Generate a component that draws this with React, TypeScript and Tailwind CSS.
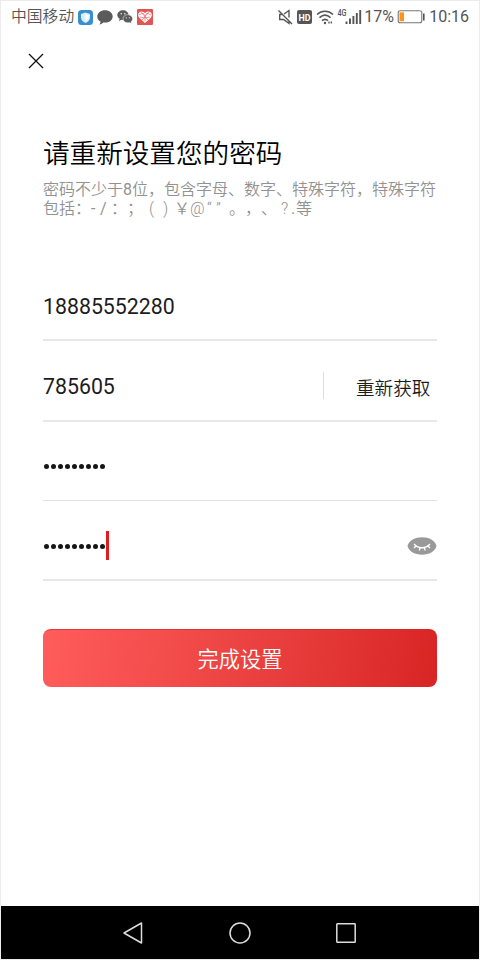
import type { ReactNode } from "react";

function StatusBar() {
    return (
        <div className="flex h-8 shrink-0 items-center justify-between pl-[10px] pr-[10px] text-base text-[#555]">
            <div className="flex items-center">
                <span className="w-[67px] whitespace-nowrap text-[15.8px] font-[350]">中国移动</span>
                <svg width="15" height="15" viewBox="0 0 15 15">
                    <rect width="15" height="15" rx="3.5" fill="#378fce" />
                    <path d="M7.5 2.5 12 4v3.5c0 2.5-1.9 4.3-4.5 5.5C4.9 11.8 3 10 3 7.5V4Z" fill="#d9efff" />
                    <path d="M7.5 4v7.5C9.4 10.4 10.6 9.2 10.6 7.3V5Z" fill="#fff" />
                </svg>
                <svg className="ml-[4px]" width="16" height="15" viewBox="0 0 16 15">
                    <path d="M8 .2c4.200 0 7.700 2.600 7.700 6.200S12.200 12.600 8 12.600c-.6 0-1.200 0-1.700-.1-1 1-2.300 1.700-3.900 1.900.8-.9 1.100-1.800 1.100-2.900C1.500 10.400.3 8.500.3 6.400.3 2.800 3.800.2 8 .2Z" fill="#5b5b5b" />
                </svg>
                <svg className="ml-[4px]" width="16" height="14" viewBox="0 0 16 14">
                    <path d="M6 .3c3 0 5.600 2.100 5.600 4.800S9 9.900 6 9.900c-.6 0-1.200-.1-1.700-.2L2 11l.6-2.300C1.200 7.900.3 6.600.3 5.100.3 2.400 3 .3 6 .3Z" fill="#5b5b5b" />
                    <path d="M10.700 4.700c2.700 0 4.900 1.800 4.900 4.100 0 1.200-.6 2.200-1.600 3l.4 1.800-2-1c-.5.200-1.100.2-1.700.2-2.600 0-4.700-1.700-4.700-4s2.100-4.100 4.700-4.100Z" fill="#5b5b5b" stroke="#fff" strokeWidth=".5" />
                    <g fill="#fff">
                        <circle cx="4.200" cy="3.800" r=".7" />
                        <circle cx="7.800" cy="3.800" r=".7" />
                        <circle cx="9.200" cy="7.800" r=".6" />
                        <circle cx="12.300" cy="7.800" r=".6" />
                    </g>
                </svg>
                <svg className="ml-[4px]" width="16" height="16" viewBox="0 0 16 16">
                    <rect width="16" height="16" rx="1" fill="#e55454" />
                    <path d="M8 14 2.200 8.800C-.2 5.500 2 2.500 4.700 2.500 6.300 2.500 7.300 3.200 8 4.300c.7-1.100 1.700-1.800 3.300-1.800 2.700 0 4.900 3 2.500 6.300Z" fill="#fff" />
                    <path d="m4 3 7 8M12 3 5 11M2 6l4-2 2 3 2-3 4 2M3 8l5 1 5-1M8 7v5" stroke="#e55454" strokeWidth=".6" fill="none" />
                </svg>
            </div>
            <div className="flex items-center font-[Roboto]">
                <svg width="16" height="16" viewBox="0 0 16 16" fill="none" stroke="#555" strokeWidth="1.400">
                    <path d="M.5 1.500 14 15M6 5 11 1.500v7M11 12.500v1.800L5.500 10.500H1.700v-5h2" />
                </svg>
                <svg className="ml-[3px]" width="16" height="14" viewBox="0 0 16 14">
                    <rect width="15" height="14" rx="2" fill="#555" />
                    <text x="1.500" y="10.600" fontFamily="Roboto" fontSize="9.500" fontWeight="700" fill="#fff" textLength="12" lengthAdjust="spacingAndGlyphs">HD</text>
                </svg>
                <svg className="ml-[3px]" width="18" height="15" viewBox="0 0 18 15" fill="none" stroke="#555" strokeWidth="1.600">
                    <path d="M1 4.500c4.800-4.300 11.200-4.300 16 0M3.500 7.700c3.400-3.100 7.600-3.100 11 0M6 10.700c1.900-1.700 4.100-1.700 6 0" />
                    <circle cx="9" cy="13" r="1.200" fill="#555" stroke="none" />
                    <path d="M13 11.500v2M15.300 11.500v2" strokeWidth="1.300" />
                </svg>
                <svg className="ml-[3px]" width="26" height="16" viewBox="0 0 26 16">
                    <text x=".5" y="7" fontFamily="Roboto" fontSize="9" fontWeight="500" fill="#555" textLength="9" lengthAdjust="spacingAndGlyphs">4G</text>
                    <path d="M9.500 12.500V15M13 9.500V15M16.400 7v8M19.800 4v11M23.200 1v14" stroke="#555" strokeWidth="1.900" />
                </svg>
                <span className="ml-px w-[31px] whitespace-nowrap">17%</span>
                <svg className="ml-[2px]" width="28" height="14" viewBox="0 0 28 14">
                    <rect x="1.200" y=".7" width="23.600" height="12" rx="2" fill="none" stroke="#777" strokeWidth="1.100" />
                    <rect x="2.500" y="2.300" width="4.500" height="8.900" fill="#ff9416" />
                    <path d="M26.800 3.500v7" stroke="#555" strokeWidth="1.600" />
                </svg>
                <span className="ml-1">10:16</span>
            </div>
        </div>
    );
}

function Field({ className, children }: { className: string; children: ReactNode }) {
    return <div className={`flex items-center text-[21.3px] text-[#1c1c1c] ${className}`}>{children}</div>;
}

function Dots() {
    return (
        <div className="flex gap-[2.1px] pl-[0.5px]">
            {Array.from({ length: 9 }, (_, i) => (
                <span key={i} className="size-[5px] rounded-full bg-[#161616]" />
            ))}
        </div>
    );
}

export default function App() {
    return (
        <div className="flex h-[960px] w-[480px] flex-col overflow-hidden border border-[#ececec] bg-white font-[Roboto,'Noto_Sans_CJK_SC',sans-serif]" lang="zh-CN">
            <StatusBar />
            <main className="flex flex-1 flex-col px-[42px]">
                <button className="mt-5 -ml-[15px] size-4" aria-label="关闭">
                    <svg width="16" height="16" viewBox="0 0 16 16" stroke="#111" strokeWidth="1.300">
                        <path d="m1 1 14 14M15 1 1 15" />
                    </svg>
                </button>
                <h1 className="mt-[65px] h-10 whitespace-nowrap text-[26.6px] leading-10 font-[350] text-black">请重新设置您的密码</h1>
                <div className="mt-[6px] h-[38px] text-base leading-[19px] font-[350] whitespace-nowrap text-[#929292]">
                    <p>密码不少于<span className="font-normal">8</span>位，包含字母、数字、特殊字符，特殊字符</p>
                    <p className="flex">
                        <span className="w-8">包括</span>
                        <span className="w-4">：</span>
                        <span className="w-[9px] font-normal">-</span>
                        <span className="w-[11px] font-normal">/</span>
                        <span className="w-4">：</span>
                        <span className="w-4">；</span>
                        <span className="ml-[6px] w-[14px]">(</span>
                        <span className="w-[11px]">)</span>
                        <span className="w-4">￥</span>
                        <span className="w-[17px]">@</span>
                        <span className="w-[22px] tracking-[5px]">“”</span>
                        <span className="w-4">。</span>
                        <span className="w-4">，</span>
                        <span className="w-4">、</span>
                        <span className="ml-1 w-[10px]">?</span>
                        <span className="w-[5px] font-normal">.</span>
                        <span>等</span>
                    </p>
                </div>
                <Field className="mt-[54px] h-[69px] border-b-2 border-[#e8e8e8] pt-[2px]">18885552280</Field>
                <Field className="h-[81px] border-b-2 border-[#e8e8e8]">
                    <span className="pt-3">785605</span>
                    <div className="mt-[10px] ml-auto flex h-[27px] w-[114px] items-center border-l border-[#ddd] pl-8">
                        <button className="pt-[8px] whitespace-nowrap text-[18.6px] font-[350]">重新获取</button>
                    </div>
                </Field>
                <Field className="h-[79px] border-b border-[#e2e2e2] pt-[11px]"><Dots /></Field>
                <Field className="h-20 border-b-2 border-[#e8e8e8] pt-[11px]">
                    <div className="pt-px"><Dots /></div>
                    <span className="ml-px h-[29px] w-[3px] bg-[#e21b1b]" />
                    <svg className="ml-auto" width="30" height="18" viewBox="0 0 30 18">
                        <path d="M.5 9C2 3.500 8 .3 15 .3S28 3.500 29.500 9C28 14.500 22 17.700 15 17.700S2 14.500.5 9Z" fill="#999" />
                        <path d="M7 7c4.500 5 11.500 5 16 0M9 9l-2 2M13 11l-.7 2.500M17.500 11l.7 2.500M21 9l2 2" fill="none" stroke="#fff" strokeWidth="1.300" />
                    </svg>
                </Field>
                <button className="mt-12 h-[58px] rounded-lg border-t border-[#e02020]/60 bg-linear-100 from-[#ff5c5c] to-[#d82424] pt-[2px] text-[21.2px] font-[350] text-white">完成设置</button>
            </main>
            <nav className="flex h-[53px] shrink-0 items-center bg-black">
                <svg className="ml-[122px]" width="20" height="24" viewBox="0 0 20 24" fill="none" stroke="#ddd" strokeWidth="1.500" strokeLinejoin="round">
                    <path d="M18.500 2v20L1 12Z" />
                </svg>
                <svg className="ml-[86px]" width="22" height="22" viewBox="0 0 22 22" fill="none" stroke="#ddd" strokeWidth="1.500">
                    <circle cx="11" cy="11" r="10" />
                </svg>
                <svg className="ml-[85px]" width="20" height="20" viewBox="0 0 20 20" fill="none" stroke="#ddd" strokeWidth="1.500">
                    <rect x=".8" y=".8" width="18.400" height="18.400" rx=".5" />
                </svg>
            </nav>
        </div>
    );
}
